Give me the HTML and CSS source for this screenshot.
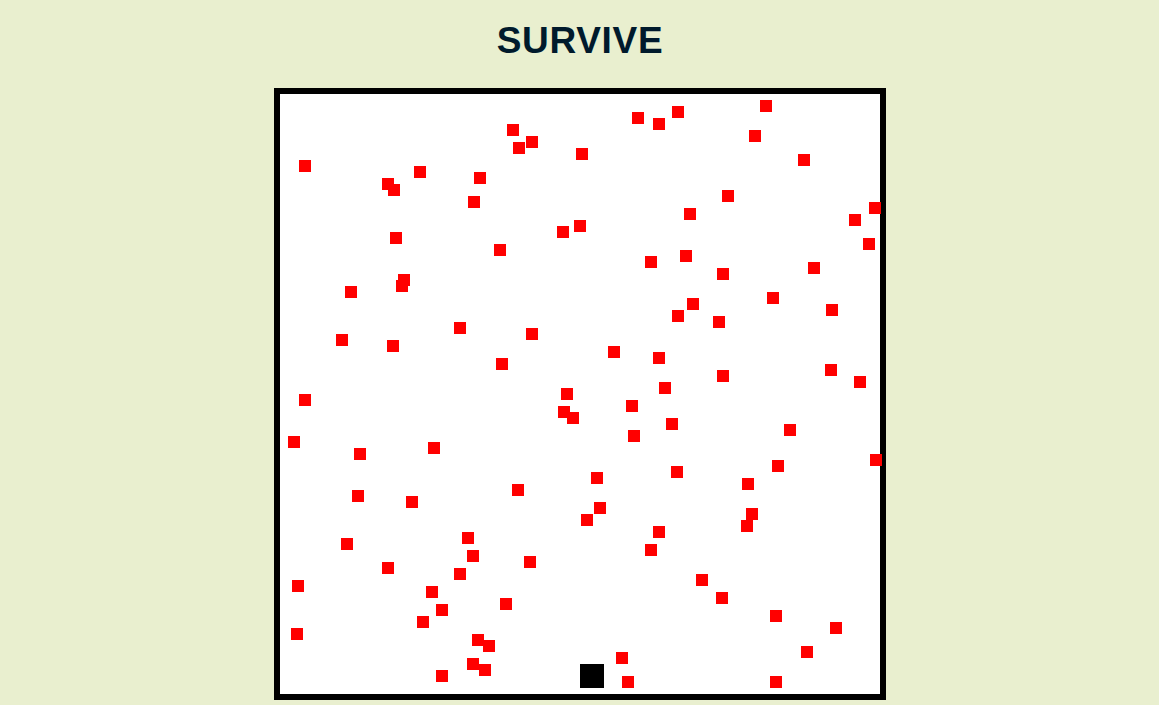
FILE: index.html
```html
<!DOCTYPE html>
<html lang="en">
<head>
    <meta charset="UTF-8">
    <meta name="viewport" content="width=device-width, initial-scale=1.0">
    <title>Survive</title>
    <link rel="stylesheet" href="styles.css">
</head>
<body>
    <h1>SURVIVE</h1>
    <div id="board" class="board">
        <div class="player"></div>
    </div>

    <script>
        // Enemy centres, in page pixels as they sit in the window
        const enemies = [
            [638,118],[659,124],[678,112],[766,106],[755,136],[804,160],[513,130],[532,142],[519,148],[582,154],
            [305,166],[420,172],[388,184],[394,190],[480,178],[474,202],[728,196],[690,214],[875,208],[855,220],
            [869,244],[580,226],[563,232],[396,238],[500,250],[651,262],[686,256],[723,274],[814,268],[404,280],
            [402,286],[351,292],[773,298],[693,304],[678,316],[719,322],[832,310],[460,328],[532,334],[342,340],
            [393,346],[614,352],[659,358],[502,364],[723,376],[831,370],[860,382],[665,388],[567,394],[305,400],
            [632,406],[564,412],[573,418],[672,424],[790,430],[634,436],[294,442],[434,448],[360,454],[876,460],
            [778,466],[677,472],[597,478],[748,484],[518,490],[358,496],[412,502],[600,508],[752,514],[587,520],
            [747,526],[659,532],[468,538],[347,544],[651,550],[473,556],[530,562],[388,568],[460,574],[702,580],
            [298,586],[432,592],[722,598],[506,604],[442,610],[776,616],[423,622],[836,628],[297,634],[478,640],
            [489,646],[807,652],[622,658],[473,664],[485,670],[442,676],[628,682],[776,682]
        ];

        const board = document.getElementById("board");
        enemies.forEach(function (pos) {
            const enemy = document.createElement("div");
            enemy.className = "enemy";
            // 280,94 is the board's inner corner, 6 is half an enemy
            enemy.style.left = (pos[0] - 280 - 6) + "px";
            enemy.style.top = (pos[1] - 94 - 6) + "px";
            board.appendChild(enemy);
        });
    </script>
</body>
</html>
```

FILE: styles.css
```css
body { margin: 0; background-color: #e9efcf; font-family: "Liberation Sans", Arial, sans-serif; }
h1 { margin: 0 0 0 1px; padding-top: 20px; height: 68px; font-size: 37px; letter-spacing: 0.7px; text-align: center; color: #001a2c; }
.board { position: relative; width: 600px; height: 600px; margin: 0 auto; background: white; border: 6px solid black; }
.player { position: absolute; left: 300px; top: 570px; width: 24px; height: 24px; background: black; }
.enemy { position: absolute; width: 12px; height: 12px; background: red; }
```
